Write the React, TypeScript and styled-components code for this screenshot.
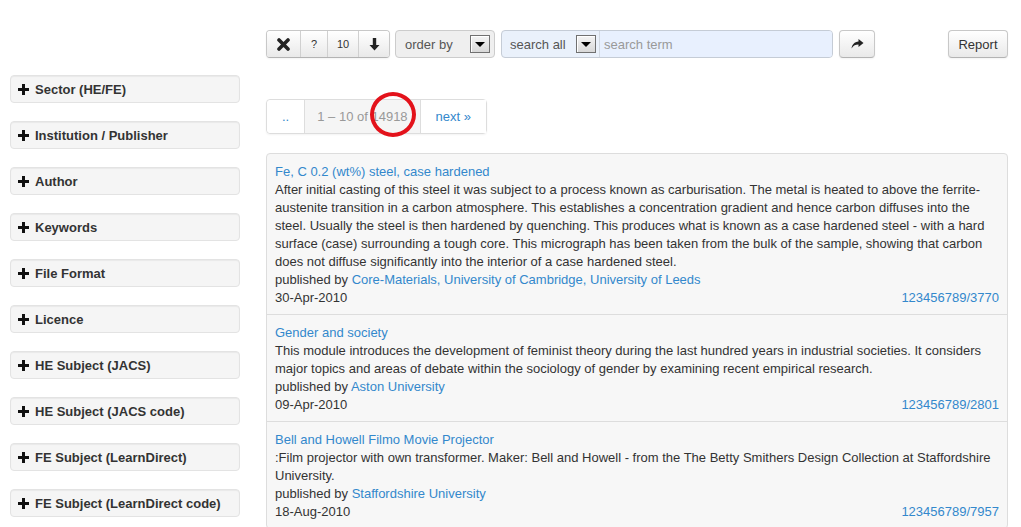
import React from "react";
import styled, { createGlobalStyle } from "styled-components";

const Global = createGlobalStyle`
  html, body { margin: 0; padding: 0; background: #fff; }
  body { font-family: "Liberation Sans", Arial, sans-serif; color: #333; font-size: 13px; }
  * { box-sizing: border-box; }
`;

const Page = styled.div`
  display: flex;
  align-items: flex-start;
  padding: 30px 13px 0 10px;
  width: 1021px;
  height: 527px;
  overflow: hidden;
`;

const Sidebar = styled.div`
  width: 230px;
  margin-top: 45px;
  display: flex;
  flex-direction: column;
  gap: 18px;
  flex-shrink: 0;
`;

const Facet = styled.div`
  height: 28px;
  display: flex;
  align-items: center;
  gap: 6px;
  padding: 0 7px;
  background: #f5f5f5;
  border: 1px solid #e3e3e3;
  border-radius: 4px;
  box-shadow: inset 0 1px 1px rgba(0, 0, 0, 0.05);
  font-size: 13px;
  font-weight: bold;
  color: #333;
`;

const Main = styled.div`
  flex: 1;
  margin-left: 26px;
  display: flex;
  flex-direction: column;
`;

const Toolbar = styled.div`
  display: flex;
  align-items: center;
  height: 28px;
`;

const BtnGroup = styled.div`
  display: flex;
  height: 28px;
  border: 1px solid #c8c8c8;
  border-bottom-color: #b3b3b3;
  border-radius: 4px;
  overflow: hidden;
  box-shadow: 0 1px 2px rgba(0, 0, 0, 0.05);
`;

const GroupBtn = styled.div<{ $w: number }>`
  width: ${(p) => p.$w}px;
  display: flex;
  align-items: center;
  justify-content: center;
  background: linear-gradient(#ffffff, #e9e9e9);
  font-size: 11px;
  color: #333;
  & + & { border-left: 1px solid #d0d0d0; }
`;

const Btn = styled.div<{ $w: number }>`
  width: ${(p) => p.$w}px;
  height: 28px;
  display: flex;
  align-items: center;
  justify-content: center;
  background: linear-gradient(#ffffff, #e9e9e9);
  border: 1px solid #c8c8c8;
  border-bottom-color: #b3b3b3;
  border-radius: 4px;
  box-shadow: 0 1px 2px rgba(0, 0, 0, 0.05);
  font-size: 13px;
  color: #333;
`;

const SelectBox = styled.div<{ $w: number }>`
  width: ${(p) => p.$w}px;
  height: 28px;
  display: flex;
  align-items: center;
  justify-content: space-between;
  padding: 0 4px 0 9px;
  background: #efefef;
  border: 1px solid #cccccc;
  border-radius: 4px;
  font-size: 13px;
  color: #555;
`;

const SearchGroup = styled.div`
  display: flex;
  width: 332px;
  height: 28px;
  margin-left: 6px;
  border: 1px solid #c5ccd6;
  border-radius: 4px;
  background: #eaf1fb;
  overflow: hidden;
`;

const SearchSelect = styled.div`
  width: 98px;
  display: flex;
  align-items: center;
  justify-content: space-between;
  padding: 0 3px 0 8px;
  font-size: 13px;
  color: #555;
  border-right: 1px solid #d2d9e2;
`;

const SearchInput = styled.div`
  flex: 1;
  display: flex;
  align-items: center;
  padding-left: 4px;
  background: #e8f0fe;
  font-size: 13px;
  color: #999;
`;

const DropArrow = styled.span`
  width: 20px;
  height: 18px;
  border: 1px solid #707070;
  background: linear-gradient(#f4f4f4, #d8d8d8);
  box-shadow: inset 1px 1px 0 #fff;
  display: flex;
  align-items: center;
  justify-content: center;
  &::after {
    content: "";
    border-left: 5px solid transparent;
    border-right: 5px solid transparent;
    border-top: 5px solid #000;
    margin-top: 1px;
  }
`;

const Spacer = styled.div`
  flex: 1;
`;

const PagerWrap = styled.div`
  position: relative;
  align-self: flex-start;
  margin-top: 41px;
  display: flex;
  height: 35px;
  border: 1px solid #dddddd;
  border-radius: 4px;
  box-shadow: 0 1px 2px rgba(0, 0, 0, 0.05);
  font-size: 13px;
`;

const PagerCell = styled.div<{ $active?: boolean; $pad: number }>`
  display: flex;
  align-items: center;
  padding: 0 ${(p) => p.$pad}px;
  background: ${(p) => (p.$active ? "#f5f5f5" : "#fff")};
  color: ${(p) => (p.$active ? "#999" : "#3388cc")};
  & + & { border-left: 1px solid #dddddd; }
  &:first-child { border-radius: 4px 0 0 4px; }
  &:last-child { border-radius: 0 4px 4px 0; }
`;

const Circle = styled.div`
  position: absolute;
  left: 103px;
  top: -8px;
  width: 46px;
  height: 45px;
  border: 4px solid #e3121b;
  border-radius: 50%;
  pointer-events: none;
`;

const Results = styled.div`
  margin-top: 19px;
  background: #f7f7f7;
  border: 1px solid #dddddd;
  border-radius: 4px;
`;

const Item = styled.div`
  padding: 9px 8px 7px 8px;
  line-height: 18px;
  font-size: 13px;
  & + & { border-top: 1px solid #dddddd; }
`;

const Link = styled.span`
  color: #3388cc;
`;

const Desc = styled.div`
  color: #333;
`;

const MetaRow = styled.div`
  display: flex;
  justify-content: space-between;
`;

const PlusIcon = () => (
  <svg width="11" height="11" viewBox="0 0 11 11">
    <path d="M4 0h3v4h4v3H7v4H4V7H0V4h4z" fill="#111" />
  </svg>
);

const XIcon = () => (
  <svg width="13" height="13" viewBox="0 0 13 13">
    <path d="M2 2L11 11M11 2L2 11" stroke="#222" strokeWidth="3.6" strokeLinecap="round" />
  </svg>
);

const DownIcon = () => (
  <svg width="11" height="13" viewBox="0 0 11 13">
    <path d="M3.8 0h3.4v7h3.3L5.5 12.5 0.5 7h3.3z" fill="#222" />
  </svg>
);

const ShareIcon = () => (
  <svg width="13" height="12" viewBox="0 0 13 12">
    <path d="M7.5 1L12.5 5 7.5 9V6.6C4.5 6.6 2.5 7.6 0.5 10.5 1 6.5 3.5 3.6 7.5 3.4z" fill="#222" />
  </svg>
);

const facets = [
  "Sector (HE/FE)",
  "Institution / Publisher",
  "Author",
  "Keywords",
  "File Format",
  "Licence",
  "HE Subject (JACS)",
  "HE Subject (JACS code)",
  "FE Subject (LearnDirect)",
  "FE Subject (LearnDirect code)",
];

const items = [
  {
    title: "Fe, C 0.2 (wt%) steel, case hardened",
    desc:
      "After initial casting of this steel it was subject to a process known as carburisation. The metal is heated to above the ferrite-austenite transition in a carbon atmosphere. This establishes a concentration gradient and hence carbon diffuses into the steel. Usually the steel is then hardened by quenching. This produces what is known as a case hardened steel - with a hard surface (case) surrounding a tough core. This micrograph has been taken from the bulk of the sample, showing that carbon does not diffuse significantly into the interior of a case hardened steel.",
    pub: "Core-Materials, University of Cambridge, University of Leeds",
    date: "30-Apr-2010",
    id: "123456789/3770",
  },
  {
    title: "Gender and society",
    desc:
      "This module introduces the development of feminist theory during the last hundred years in industrial societies. It considers major topics and areas of debate within the sociology of gender by examining recent empirical research.",
    pub: "Aston University",
    date: "09-Apr-2010",
    id: "123456789/2801",
  },
  {
    title: "Bell and Howell Filmo Movie Projector",
    desc:
      ":Film projector with own transformer. Maker: Bell and Howell - from the The Betty Smithers Design Collection at Staffordshire University.",
    pub: "Staffordshire University",
    date: "18-Aug-2010",
    id: "123456789/7957",
  },
];

export default function App() {
  return (
    <>
      <Global />
      <Page>
        <Sidebar>
          {facets.map((f) => (
            <Facet key={f}>
              <PlusIcon />
              {f}
            </Facet>
          ))}
        </Sidebar>
        <Main>
          <Toolbar>
            <BtnGroup>
              <GroupBtn $w={33}><XIcon /></GroupBtn>
              <GroupBtn $w={27}>?</GroupBtn>
              <GroupBtn $w={31}>10</GroupBtn>
              <GroupBtn $w={31}><DownIcon /></GroupBtn>
            </BtnGroup>
            <SelectBox $w={100} style={{ marginLeft: 5 }}>
              order by
              <DropArrow />
            </SelectBox>
            <SearchGroup>
              <SearchSelect>
                search all
                <DropArrow />
              </SearchSelect>
              <SearchInput>search term</SearchInput>
            </SearchGroup>
            <Btn $w={36} style={{ marginLeft: 6 }}><ShareIcon /></Btn>
            <Spacer />
            <Btn $w={60}>Report</Btn>
          </Toolbar>
          <PagerWrap>
            <PagerCell $pad={15}>..</PagerCell>
            <PagerCell $pad={12} $active>1 – 10 of 14918</PagerCell>
            <PagerCell $pad={15}>next »</PagerCell>
            <Circle />
          </PagerWrap>
          <Results>
            {items.map((it) => (
              <Item key={it.id}>
                <Link>{it.title}</Link>
                <Desc>{it.desc}</Desc>
                <div>
                  published by <Link>{it.pub}</Link>
                </div>
                <MetaRow>
                  <span>{it.date}</span>
                  <Link>{it.id}</Link>
                </MetaRow>
              </Item>
            ))}
          </Results>
        </Main>
      </Page>
    </>
  );
}
